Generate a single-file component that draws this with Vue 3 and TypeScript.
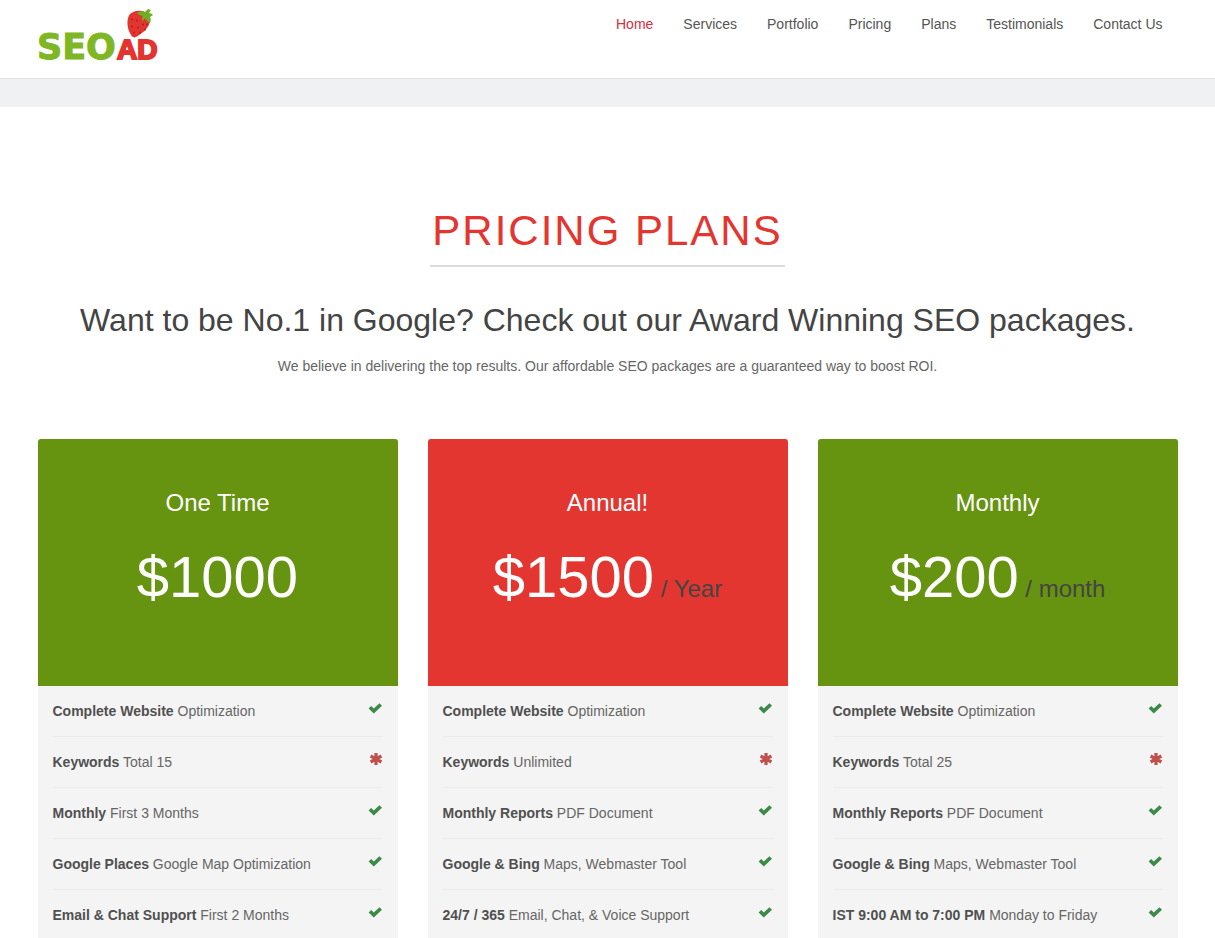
<script setup lang="ts">
interface NavItem { label: string; href: string; active?: boolean }
interface Feature { name: string; detail: string; included: boolean }
interface Plan { title: string; price: string; period?: string; featured?: boolean; features: Feature[] }

const nav: NavItem[] = [
  { label: 'Home', href: '#home', active: true },
  { label: 'Services', href: '#services' },
  { label: 'Portfolio', href: '#portfolio' },
  { label: 'Pricing', href: '#pricing' },
  { label: 'Plans', href: '#plans' },
  { label: 'Testimonials', href: '#testimonials' },
  { label: 'Contact Us', href: '#contact' },
]

const plans: Plan[] = [
  {
    title: 'One Time',
    price: '$1000',
    features: [
      { name: 'Complete Website', detail: 'Optimization', included: true },
      { name: 'Keywords', detail: 'Total 15', included: false },
      { name: 'Monthly', detail: 'First 3 Months', included: true },
      { name: 'Google Places', detail: 'Google Map Optimization', included: true },
      { name: 'Email & Chat Support', detail: 'First 2 Months', included: true },
    ],
  },
  {
    title: 'Annual!',
    price: '$1500',
    period: '/ Year',
    featured: true,
    features: [
      { name: 'Complete Website', detail: 'Optimization', included: true },
      { name: 'Keywords', detail: 'Unlimited', included: false },
      { name: 'Monthly Reports', detail: 'PDF Document', included: true },
      { name: 'Google & Bing', detail: 'Maps, Webmaster Tool', included: true },
      { name: '24/7 / 365', detail: 'Email, Chat, & Voice Support', included: true },
    ],
  },
  {
    title: 'Monthly',
    price: '$200',
    period: '/ month',
    features: [
      { name: 'Complete Website', detail: 'Optimization', included: true },
      { name: 'Keywords', detail: 'Total 25', included: false },
      { name: 'Monthly Reports', detail: 'PDF Document', included: true },
      { name: 'Google & Bing', detail: 'Maps, Webmaster Tool', included: true },
      { name: 'IST 9:00 AM to 7:00 PM', detail: 'Monday to Friday', included: true },
    ],
  },
]
</script>

<template>
  <div class="page">
    <header class="site-header">
      <div class="container header-inner">
        <a class="logo" href="#home" aria-label="SEO AD">
          <svg width="122" height="54" viewBox="0 0 122 54">
            <text class="logo-seo" x="-1" y="50">SEO</text>
            <text class="logo-ad" x="79" y="50">AD</text>
            <path fill="#e3352f" d="M92 5c3-3 8-4 12-3 5 1 8 5 8 10-1 7-7 12-14 16-2 1-4 0-5-2-4-6-5-16-1-21z" />
            <path fill="#6fae25" d="M99 4c3-2 6-2 8-1l3-3 3 1-2 3c2 0 3 1 4 2l-3 2c1 2 1 4 0 6-2-1-4-3-5-5l-2 3c-2-2-1-4 0-5-2 0-4-1-6-3z" />
            <path stroke="#8e1d1a" stroke-width="1.2" stroke-linecap="round" d="M94 10v1M99 11v1M94 17v1M100 18v1M105 15v1M96 23v1M102 23v1M109 15v1M107 20v1" />
          </svg>
        </a>
        <nav class="main-nav" aria-label="Main">
          <a v-for="item in nav" :key="item.label" :href="item.href" :class="{ active: item.active }">{{ item.label }}</a>
        </nav>
      </div>
    </header>
    <div class="band"></div>

    <main class="container pricing">
      <div class="intro">
        <h1>PRICING PLANS</h1>
        <h2>Want to be No.1 in Google? Check out our Award Winning SEO packages.</h2>
        <p>We believe in delivering the top results. Our affordable SEO packages are a guaranteed way to boost ROI.</p>
      </div>

      <div class="plans">
        <section v-for="plan in plans" :key="plan.title" class="plan" :class="{ featured: plan.featured }">
          <div class="plan-head">
            <h3>{{ plan.title }}</h3>
            <div class="price">{{ plan.price }}<span v-if="plan.period" class="period">{{ ' ' + plan.period }}</span></div>
          </div>
          <ul>
            <li v-for="f in plan.features" :key="f.name">
              <span><strong>{{ f.name }}</strong> {{ f.detail }}</span>
              <svg v-if="f.included" class="mark" width="16" height="14" viewBox="0 0 16 14" role="img" aria-label="Included">
                <path fill="#3b8a47" d="M1.6 7.6 4.2 5l2.6 2.4L12.4 2.2 15 4.8 6.8 12.6z" />
              </svg>
              <svg v-else class="mark" width="16" height="14" viewBox="0 0 16 14" role="img" aria-label="Limited">
                <path stroke="#c0504c" stroke-width="3.2" d="M9 1v12M3.6 4l10.8 6M14.4 4 3.6 10" />
              </svg>
            </li>
          </ul>
        </section>
      </div>
    </main>
  </div>
</template>

<style>
body { margin: 0; background: #fff; overflow-x: hidden; }
html { scrollbar-width: none; }
</style>

<style scoped>
.page {
  font-family: "Liberation Sans", Arial, sans-serif;
  font-size: 14px;
  line-height: 20px;
  color: #666;
}
.container {
  box-sizing: border-box;
  max-width: 1170px;
  margin: 0 auto;
  padding: 0 15px;
}
.site-header { border-bottom: 1px solid #e2e2e2; }
.header-inner {
  display: flex;
  justify-content: space-between;
  align-items: flex-start;
  min-height: 78px;
}
.logo { padding-top: 9px; line-height: 0; }
.logo svg { overflow: visible; }
.logo-seo {
  font: bold 35px "DejaVu Sans", sans-serif;
  fill: #7fb724;
  stroke: #7fb724;
  stroke-width: 1px;
}
.logo-ad {
  font: bold 28px "Liberation Sans", Arial, sans-serif;
  fill: #e3352f;
  stroke: #e3352f;
  stroke-width: 2px;
}
.main-nav { display: flex; gap: 30px; padding: 14px 15px 0 0; }
.main-nav a { color: #555; text-decoration: none; }
.main-nav a.active { color: #dc2c3e; }
.band { height: 28px; background: #f0f1f3; }

.pricing { padding-top: 96px; }
.intro { text-align: center; }
h1, h2, h3, p, ul { margin: 0; font-weight: normal; }
h1 {
  display: inline-block;
  padding: 0 2px 6px;
  border-bottom: 2px solid #ddd;
  color: #e43630;
  font-size: 42px;
  line-height: 56px;
  letter-spacing: 2px;
}
h2 { margin-top: 34px; color: #444; font-size: 32px; line-height: 38px; }
.intro p { margin-top: 17px; }

.plans {
  display: grid;
  grid-template-columns: repeat(3, 1fr);
  gap: 30px;
  margin-top: 63px;
}
.plan { border-radius: 3px; overflow: hidden; background: #f4f4f4; }
.plan-head {
  box-sizing: border-box;
  min-height: 247px;
  padding-top: 50px;
  text-align: center;
  color: #fff;
  background: #669310;
}
.featured .plan-head { background: #e43630; }
h3 { font-size: 24px; line-height: 28px; }
.price { margin-top: 25px; font-size: 58px; line-height: 70px; }
.period { font-size: 24px; color: #444; }
ul { padding: 0 15px 20px; list-style: none; }
li {
  display: flex;
  justify-content: space-between;
  align-items: flex-start;
  padding: 15px 0;
  border-bottom: 1px solid #ebebeb;
}
strong { color: #505050; }
.mark { flex: none; }
</style>
